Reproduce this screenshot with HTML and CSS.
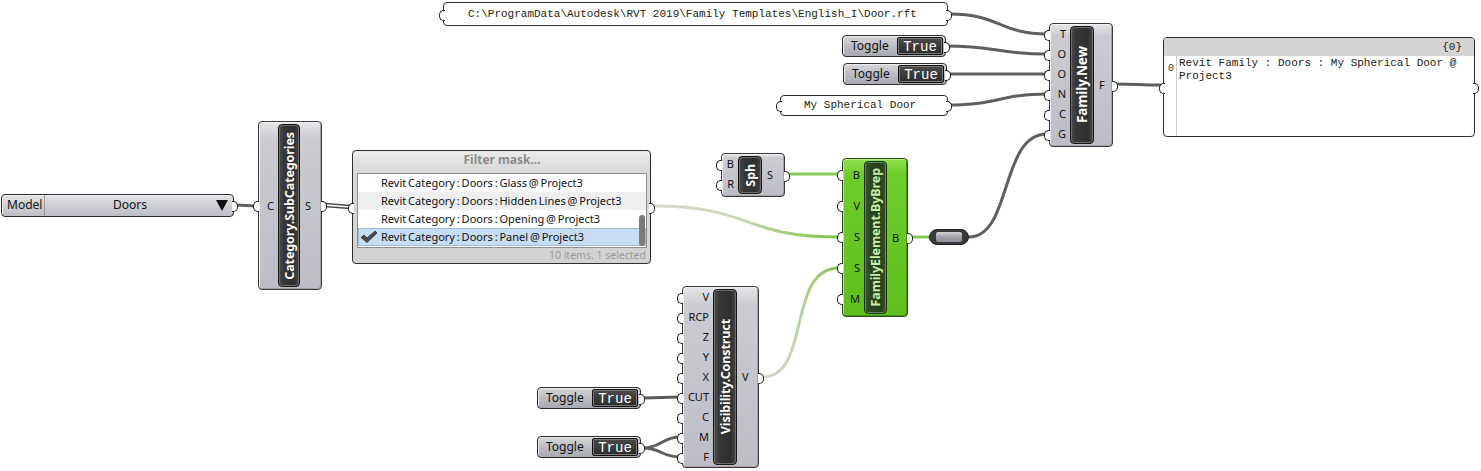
FILE: index.html
```html
<!DOCTYPE html>
<html>
<head>
<meta charset="utf-8">
<link rel="stylesheet" href="styles.css">
</head>
<body>
<div class="canvas">
  <svg class="wires" width="1481" height="471" viewBox="0 0 1481 471">
    <defs>
      <linearGradient id="gFilter" gradientUnits="userSpaceOnUse" x1="654" y1="0" x2="839" y2="0">
        <stop offset="0" stop-color="#d6d9cf"/>
        <stop offset="0.45" stop-color="#c9d8b8"/>
        <stop offset="1" stop-color="#7cc545"/>
      </linearGradient>
      <linearGradient id="gVis" gradientUnits="userSpaceOnUse" x1="762" y1="0" x2="839" y2="0">
        <stop offset="0" stop-color="#d6d9cf"/>
        <stop offset="0.4" stop-color="#c4d6b0"/>
        <stop offset="1" stop-color="#7cc545"/>
      </linearGradient>
    </defs>
    <g class="w-dark">
      <path d="M949,14 C1000,14 1000,34 1047,34"/>
      <path d="M946,46 C996,46 998,54 1047,54"/>
      <path d="M947,74 L1047,74"/>
      <path d="M949,105 C998,105 1000,94 1047,94"/>
      <path d="M1116,84 C1138,84 1138,85 1160,85"/>
      <path d="M969,237 C1012,237 1000,134 1047,134"/>
      <path d="M236,205 L256,206"/>
      <path d="M643,398 L680,397"/>
      <path d="M643,448 C661,448 662,437 680,437"/>
      <path d="M643,448 C661,448 662,457 680,457"/>
    </g>
    <g class="w-list">
      <path d="M325,205 L350,207"/>
    </g>
    <path class="w-list-in" d="M325,205 L350,207"/>
    <g class="w-green">
      <path d="M911,237 L929,237"/>
      <path d="M788,174 L839,174"/>
    </g>
    <path class="w-grad" stroke="url(#gFilter)" d="M654,206 C752,206 742,237 839,237"/>
    <path class="w-grad" stroke="url(#gVis)" d="M762,377 C812,377 786,268 839,268"/>
  </svg>

  <!-- file path panel -->
  <div class="node n-path panel text-panel port-in port-out">C:\ProgramData\Autodesk\RVT 2019\Family Templates\English_I\Door.rft</div>

  <!-- toggles -->
  <div class="node n-t1 toggle port-out"><span class="tg-lbl">Toggle</span><span class="tg-val">True</span></div>
  <div class="node n-t2 toggle port-out"><span class="tg-lbl">Toggle</span><span class="tg-val">True</span></div>
  <div class="node n-t3 toggle port-out"><span class="tg-lbl">Toggle</span><span class="tg-val">True</span></div>
  <div class="node n-t4 toggle port-out"><span class="tg-lbl">Toggle</span><span class="tg-val">True</span></div>

  <!-- name panel -->
  <div class="node n-name panel text-panel port-in port-out">My Spherical Door</div>

  <!-- Family.New -->
  <div class="node n-family comp">
    <div class="ins">
      <span class="pin">T</span><span class="pin">O</span><span class="pin">O</span><span class="pin">N</span><span class="pin">C</span><span class="pin">G</span>
    </div>
    <div class="bar"><span>Family.New</span></div>
    <div class="outs"><span class="pin">F</span></div>
  </div>

  <!-- result panel -->
  <div class="node n-result result port-in port-out">
    <div class="res-head">{0}</div>
    <div class="res-body">
      <div class="res-idx">0</div>
      <div class="res-text">Revit Family : Doors : My Spherical Door @ Project3</div>
    </div>
  </div>

  <!-- dropdown -->
  <div class="node n-dd dropdown port-out">
    <span class="dd-model">Model</span>
    <span class="dd-value">Doors</span>
    <span class="dd-arrow"></span>
  </div>

  <!-- Category.SubCategories -->
  <div class="node n-cat comp">
    <div class="ins ins-center"><span class="pin">C</span></div>
    <div class="bar"><span>Category.SubCategories</span></div>
    <div class="outs"><span class="pin">S</span></div>
  </div>

  <!-- Filter mask -->
  <div class="node n-filter filter port-in port-out">
    <div class="filter-head">Filter mask...</div>
    <div class="filter-list">
      <div class="row">Revit Category : Doors : Glass @ Project3</div>
      <div class="row alt">Revit Category : Doors : Hidden Lines @ Project3</div>
      <div class="row">Revit Category : Doors : Opening @ Project3</div>
      <div class="row sel">
        <svg class="check" width="18" height="14" viewBox="0 0 18 14"><path d="M1,7.5 L4,5 L7,8 L15,1 L17,3 L7,12.5 Z" fill="#4a4a4a" stroke="#333" stroke-width="0.8" stroke-linejoin="round"/></svg>
        Revit Category : Doors : Panel @ Project3
      </div>
      <div class="scroll"></div>
    </div>
    <div class="filter-foot">10 items, 1 selected</div>
  </div>

  <!-- Sph -->
  <div class="node n-sph comp">
    <div class="ins"><span class="pin">B</span><span class="pin">R</span></div>
    <div class="bar"><span>Sph</span></div>
    <div class="outs"><span class="pin">S</span></div>
  </div>

  <!-- FamilyElement.ByBrep -->
  <div class="node n-brep comp green">
    <div class="ins"><span class="pin">B</span><span class="pin">V</span><span class="pin">S</span><span class="pin">S</span><span class="pin">M</span></div>
    <div class="bar"><span>FamilyElement.ByBrep</span></div>
    <div class="outs"><span class="pin">B</span></div>
  </div>

  <!-- relay -->
  <div class="node n-relay relay"><div class="relay-in"></div></div>

  <!-- Visibility.Construct -->
  <div class="node n-vis comp">
    <div class="ins">
      <span class="pin">V</span><span class="pin">RCP</span><span class="pin">Z</span><span class="pin">Y</span><span class="pin">X</span><span class="pin">CUT</span><span class="pin">C</span><span class="pin">M</span><span class="pin">F</span>
    </div>
    <div class="bar"><span>Visibility.Construct</span></div>
    <div class="outs"><span class="pin">V</span></div>
  </div>
</div>
</body>
</html>
```

FILE: styles.css
```css
* { box-sizing: border-box; }
html, body { margin: 0; padding: 0; background: #fff; }

.canvas {
  position: relative;
  width: 1481px;
  height: 471px;
  overflow: hidden;
  background: #fff;
  font-family: "Noto Sans", "Open Sans", sans-serif;
  color: #111;
}

/* wires */
.wires { position: absolute; left: 0; top: 0; }
.wires path { fill: none; stroke-linecap: round; }
.w-dark path { stroke: #5f5f5f; stroke-width: 3; }
.w-list path { stroke: #4e4e4e; stroke-width: 4.5; }
.w-list-in { stroke: #fff; stroke-width: 1.3; }
.w-green path { stroke: #86c75a; stroke-width: 3; }
.w-grad { stroke-width: 3; }

/* nodes on the canvas */
.node { position: absolute; }

.n-path   { left: 443px;  top: 2px;   width: 505px; height: 24px; }
.n-t1     { left: 842px;  top: 35px;  }
.n-t2     { left: 843px;  top: 63px;  }
.n-t3     { left: 537px;  top: 387px; }
.n-t4     { left: 537px;  top: 436px; }
.n-name   { left: 780px;  top: 95px;  width: 168px; height: 21px; }
.n-family { left: 1049px; top: 23px;  width: 64px;  height: 124px; }
.n-result { left: 1163px; top: 37px;  width: 312px; height: 100px; }
.n-dd     { left: 1px;    top: 194px; width: 233px; height: 23px; }
.n-cat    { left: 258px;  top: 121px; width: 64px;  height: 169px; }
.n-filter { left: 352px;  top: 150px; width: 299px; height: 114px; }
.n-sph    { left: 721px;  top: 153px; width: 64px;  height: 44px; }
.n-brep   { left: 842px;  top: 158px; width: 66px;  height: 159px; }
.n-relay  { left: 929px;  top: 229px; width: 40px;  height: 16px; }
.n-vis    { left: 682px;  top: 286px; width: 77px;  height: 182px; }

/* generic ports */
.port-in::before,
.port-out::after {
  content: "";
  position: absolute;
  top: 50%;
  margin-top: -4.5px;
  width: 5px;
  height: 9px;
  border: 1.5px solid #1e1e1e;
  background: #fff;
}
.port-in::before { left: -5px; border-right: none; border-radius: 5px 0 0 5px; }
.port-out::after { right: -5px; border-left: none; border-radius: 0 5px 5px 0; }

/* components */
.comp {
  display: flex;
  border: 1px solid #3a3a3a;
  border-radius: 4px;
  background: linear-gradient(#e6e6e9 0%, #cbcbd1 10%, #bdbdc6 100%);
  box-shadow: inset 1px 1px 0 #f2f2f4, inset -1px -1px 0 #a2a2aa;
}
.comp.green {
  background: linear-gradient(#8ee04a 0%, #6fcd2a 10%, #5fbf1d 100%);
  box-shadow: inset 1px 1px 0 #b4f07c, inset -1px -1px 0 #46951a;
  border-color: #2e4a1c;
}

.ins, .outs { display: flex; flex-direction: column; }
.outs { justify-content: center; }
.ins-center { justify-content: center; }

.pin {
  position: relative;
  display: block;
  font-size: 11px;
  line-height: 20px;
  height: 20px;
  color: #111;
}
.ins .pin { text-align: right; padding-right: 4px; }
.outs .pin { text-align: left; padding-left: 5px; }

.ins .pin::before,
.outs .pin::after {
  content: "";
  position: absolute;
  top: 5.5px;
  width: 5px;
  height: 9px;
  border: 1.5px solid #1e1e1e;
  background: #fff;
}
.ins .pin::before { left: -6px; border-right: none; border-radius: 5px 0 0 5px; }
.outs .pin::after { right: -6px; border-left: none; border-radius: 0 5px 5px 0; }

.n-family .ins { width: 20px; }
.n-family .bar { width: 24px; }
.n-family .outs { width: 18px; }

.n-cat .ins { width: 19px; }
.n-cat .bar { width: 22px; }
.n-cat .outs { width: 21px; }

.n-sph .ins { width: 16px; }
.n-sph .bar { width: 24px; }
.n-sph .outs { width: 22px; }

.n-brep .ins { width: 21px; }
.n-brep .ins .pin { height: 31px; line-height: 31px; }
.n-brep .ins .pin::before { top: 11px; }
.n-brep .bar { width: 23px; }
.n-brep .outs { width: 20px; }

.n-vis .ins { width: 30px; }
.n-vis .bar { width: 24px; }
.n-vis .outs { width: 21px; }

.bar {
  margin: 2px 0 2px;
  border-radius: 4px;
  border: 1px solid #151515;
  background: linear-gradient(to right, #4c4c4c 0%, #363636 25%, #2f2f2f 75%, #474747 100%);
  box-shadow: inset 0 0 0 1px #6e6e6e;
  display: flex;
  align-items: center;
  justify-content: center;
  overflow: hidden;
}
.bar span {
  writing-mode: vertical-rl;
  transform: rotate(180deg);
  color: #fff;
  font-weight: 700;
  font-size: 12.5px;
  white-space: nowrap;
  letter-spacing: -0.1px;
}
.n-family .bar span { font-size: 13.5px; }
.green .bar {
  border-color: #1d3312;
  background: linear-gradient(to right, #3a5a2a 0%, #2b4620 25%, #27401c 75%, #385628 100%);
  box-shadow: inset 0 0 0 1px #5f8a48;
}
.green .bar span { color: #c6efa8; }

/* text panels */
.panel {
  background: #fff;
  border: 1px solid #2e2e2e;
  border-radius: 4px;
}
.text-panel {
  font-family: "Liberation Mono", "Courier New", monospace;
  font-size: 11px;
  color: #23230f;
  line-height: 20px;
  padding-left: 24px;
  white-space: nowrap;
}
.n-path { line-height: 22px; }
.n-name { line-height: 19px; padding-left: 23px; }

/* toggles */
.toggle {
  display: flex;
  align-items: stretch;
  width: 104px;
  height: 22px;
  border: 1px solid #2c2c2c;
  border-radius: 4px;
  background: linear-gradient(#d6d6da 0%, #bfbfc6 45%, #a9a9b2 100%);
  box-shadow: inset 1px 1px 0 #ececef;
  padding: 1px 2px 1px 1px;
}
.tg-lbl {
  flex: 1;
  font-size: 12px;
  line-height: 18px;
  padding-left: 7px;
  color: #111;
}
.tg-val {
  width: 46px;
  border: 1px solid #111;
  border-radius: 2px;
  background: linear-gradient(#4a4a4a, #2c2c2c);
  box-shadow: inset 0 0 0 1px #7a7a7a;
  color: #fff;
  font-family: "Liberation Mono", "Courier New", monospace;
  font-weight: 400;
  font-size: 14px;
  line-height: 18px;
  text-align: center;
}

/* result panel */
.result {
  background: #fff;
  border: 1px solid #2e2e2e;
  border-radius: 4px;
  display: flex;
  flex-direction: column;
  font-family: "Liberation Mono", "Courier New", monospace;
  font-size: 11px;
  color: #23230f;
}
.res-head {
  height: 18px;
  background: #d4d4d4;
  border-radius: 3px 3px 0 0;
  text-align: right;
  padding-right: 12px;
  line-height: 18px;
}
.res-body { flex: 1; display: flex; }
.res-idx {
  width: 13px;
  border-right: 1px solid #cfcfcf;
  font-size: 10px;
  padding-top: 7px;
  padding-left: 4px;
  color: #3a3a2a;
}
.res-text {
  flex: 1;
  padding: 1px 4px 0 2px;
  line-height: 13px;
}

/* dropdown */
.dropdown {
  display: flex;
  align-items: stretch;
  border: 1px solid #2c2c2c;
  border-radius: 4px;
  background: linear-gradient(#e2e2e6 0%, #cfcfd5 50%, #bdbdc5 100%);
  box-shadow: inset 1px 1px 0 #f0f0f2;
  font-size: 12px;
  line-height: 20px;
}
.dd-model {
  width: 43px;
  padding-left: 5px;
  border-right: 1px solid #9a9aa2;
}
.dd-value { flex: 1; text-align: center; padding-left: 4px; }
.dd-arrow {
  width: 22px;
  position: relative;
}
.dd-arrow::after {
  content: "";
  position: absolute;
  left: 5px;
  top: 5px;
  border-left: 6px solid transparent;
  border-right: 6px solid transparent;
  border-top: 11px solid #111;
}

/* filter mask */
.filter {
  display: flex;
  flex-direction: column;
  border: 1px solid #2e2e2e;
  border-radius: 4px;
  background: linear-gradient(#ececec 0%, #d8d8d8 18%, #d2d2d2 100%);
  padding: 0 3px 0 4px;
}
.filter-head {
  height: 22px;
  text-align: center;
  font-weight: 700;
  font-size: 12px;
  line-height: 18px;
  color: #8c8c8c;
}
.filter-list {
  position: relative;
  height: 75px;
  background: #fff;
  border: 1px solid #8e8e8e;
}
.row {
  position: relative;
  height: 18px;
  line-height: 18px;
  font-size: 11px;
  padding-left: 23px;
  white-space: nowrap;
  word-spacing: -1px;
  color: #111;
}
.row.alt { background: #efefef; }
.row.sel {
  background: #c7ddf1;
  border: 1px solid #9cbcdb;
  line-height: 16px;
  padding-left: 22px;
}
.check { position: absolute; left: 1px; top: 1px; }
.scroll {
  position: absolute;
  right: 1px;
  top: 41px;
  width: 6px;
  height: 31px;
  border-radius: 3px;
  background: #7a7a7a;
}
.filter-foot {
  flex: 1;
  text-align: right;
  font-size: 10.5px;
  line-height: 15px;
  color: #9a9a9a;
  padding-right: 1px;
}

/* relay */
.relay {
  border-radius: 8px;
  background: #3a3a3a;
  border: 1px solid #222;
  padding: 2px 6px;
}
.relay-in {
  height: 100%;
  border-radius: 2px;
  background: linear-gradient(#d2d2d8, #a4a4b0 50%, #8e8e9a);
}
```
